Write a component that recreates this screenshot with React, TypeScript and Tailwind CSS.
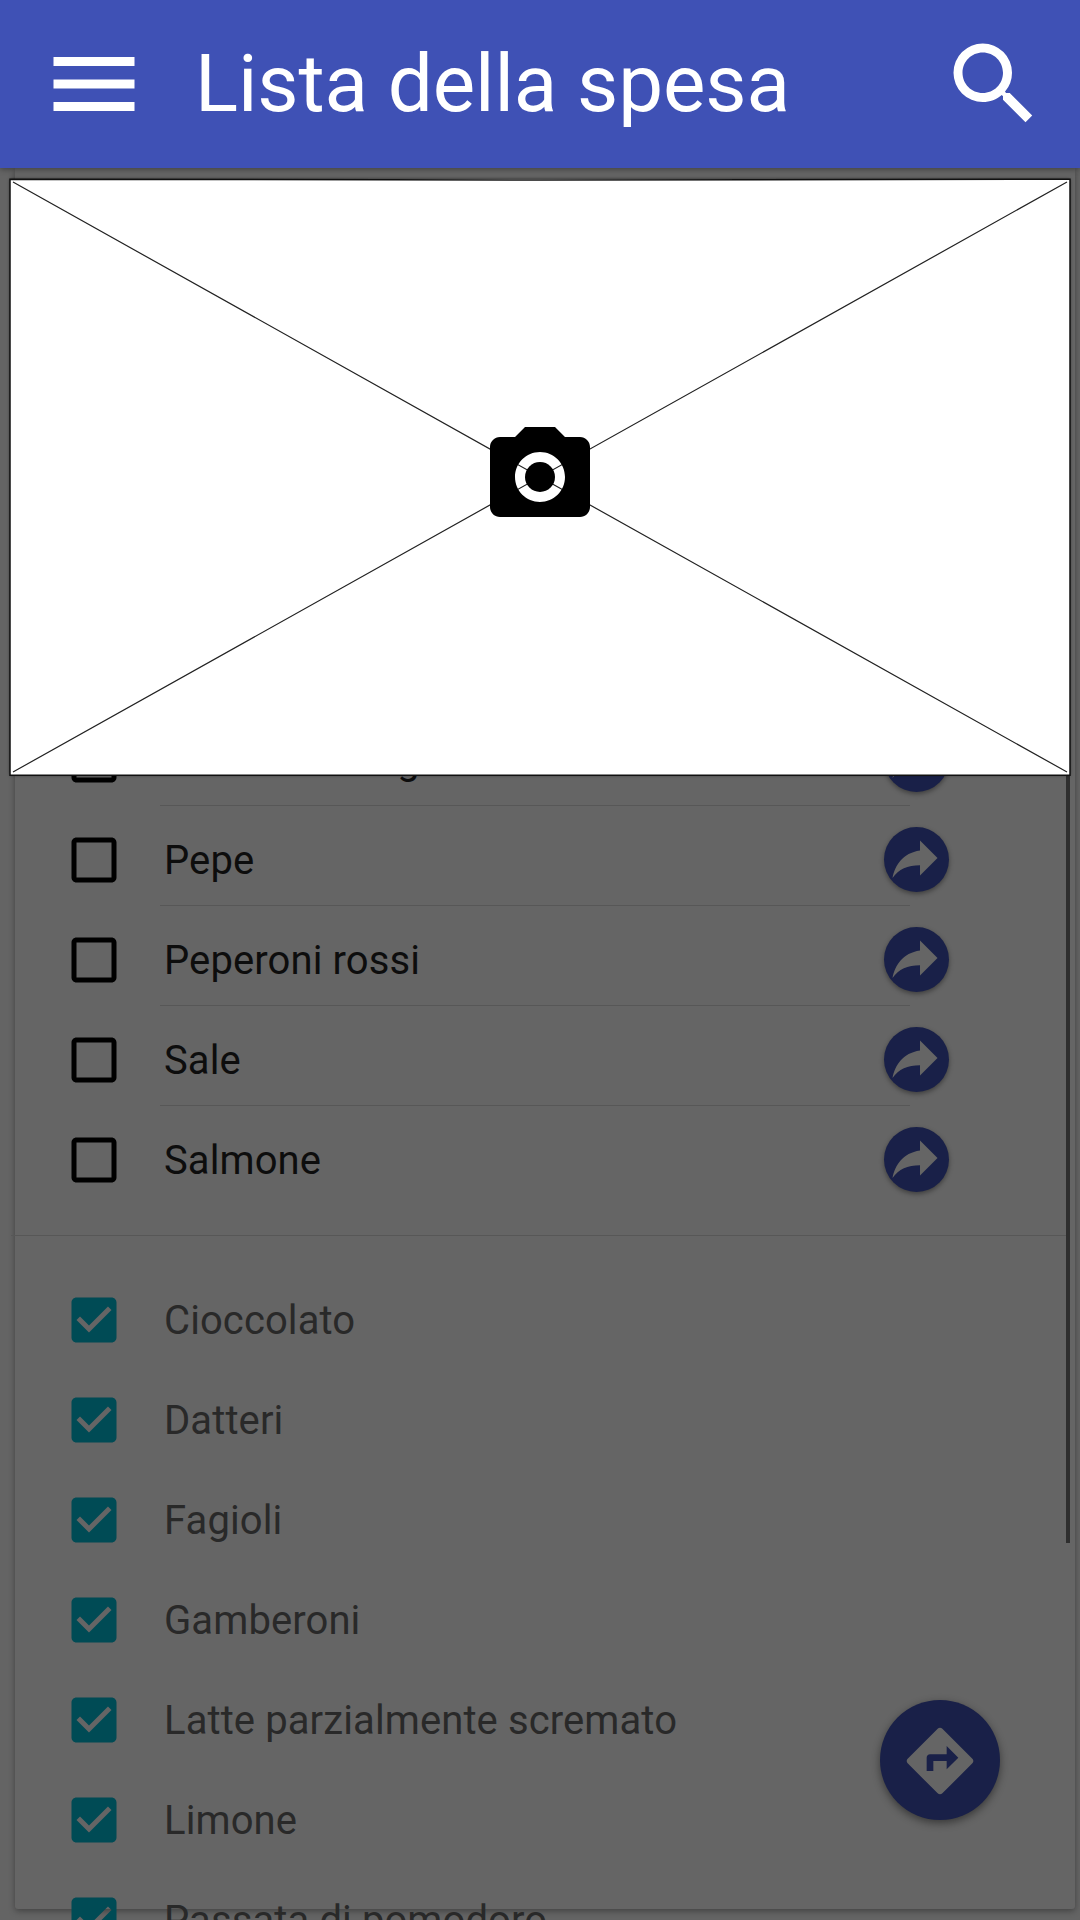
import React from "react";

const pending = ["Olio extra vergine", "Pepe", "Peperoni rossi", "Sale", "Salmone"];
const done = [
  "Cioccolato",
  "Datteri",
  "Fagioli",
  "Gamberoni",
  "Latte parzialmente scremato",
  "Limone",
  "Passata di pomodoro",
];

function Icon({ d, className }: { d: string; className: string }) {
  return (
    <svg viewBox="0 0 24 24" fill="currentColor" className={className}>
      <path d={d} />
    </svg>
  );
}

const MENU = "M3 18h18v-2H3v2zm0-5h18v-2H3v2zm0-7v2h18V6H3z";
const SEARCH =
  "M15.5 14h-.79l-.28-.27A6.471 6.471 0 0 0 16 9.5 6.5 6.5 0 1 0 9.5 16c1.61 0 3.09-.59 4.23-1.57l.27.28v.79l5 4.99L20.49 19l-4.99-5zm-6 0C7.01 14 5 11.99 5 9.5S7.01 5 9.5 5 14 7.01 14 9.5 11.99 14 9.5 14z";
const FORWARD = "M14 9V5l7 7-7 7v-4.1c-5 0-8.5 1.6-11 5.1 1-5 4-10 11-11z";
const DIRECTIONS =
  "M21.71 11.29l-9-9c-.39-.39-1.02-.39-1.41 0l-9 9c-.39.39-.39 1.02 0 1.41l9 9c.39.39 1.02.39 1.41 0l9-9c.39-.38.39-1.01 0-1.41zM14 14.5V12h-4v3H8v-4c0-.55.45-1 1-1h5V7.5l3.5 3.5-3.5 3.5z";
const BOX =
  "M19 5v14H5V5h14m0-2H5c-1.1 0-2 .9-2 2v14c0 1.1.9 2 2 2h14c1.1 0 2-.9 2-2V5c0-1.1-.9-2-2-2z";
const BOX_CHECKED =
  "M19 3H5c-1.11 0-2 .9-2 2v14c0 1.1.89 2 2 2h14c1.11 0 2-.9 2-2V5c0-1.1-.89-2-2-2zm-9 14l-5-5 1.41-1.41L10 14.17l7.59-7.59L19 8l-9 9z";

function Header() {
  return (
    <header className="relative z-20 flex h-[168px] shrink-0 items-center bg-[#3f51b5] pr-8 pl-10 text-white shadow-[0_1px_6px_rgba(0,0,0,0.4)]">
      <Icon d={MENU} className="size-[108px] shrink-0" />
      <h1 className="ml-[47px] flex-1 text-[80px] leading-[108px] font-normal tracking-[-0.1px] whitespace-nowrap">
        Lista della spesa
      </h1>
      <Icon d={SEARCH} className="size-[108px] shrink-0" />
    </header>
  );
}

function PendingRow({ label, divided }: { label: string; divided: boolean }) {
  return (
    <li className="flex h-[100px] items-center pl-[49px]">
      <Icon d={BOX} className="mt-2 size-[60px] shrink-0 text-black" />
      <div
        className={
          "ml-9 flex h-[100px] w-[750px] items-center border-b pt-2 pl-1 " +
          (divided ? "border-[#575757]" : "border-transparent")
        }
      >
        <span className="mt-[3px] flex-1 text-[40px] leading-[48px] tracking-[0.1px] whitespace-nowrap text-[#0d0d0d]">
          {label}
        </span>
        <span className="-mr-[39px] flex size-[65px] shrink-0 items-center justify-center rounded-full bg-[#192048] pr-[3px] pb-[3px] shadow-[0_2px_5px_rgba(0,0,0,0.4)]">
          <Icon d={FORWARD} className="size-[60px] shrink-0 text-[#656565]" />
        </span>
      </div>
    </li>
  );
}

function DoneRow({ label }: { label: string }) {
  return (
    <li className="flex h-[100px] items-center pl-[49px]">
      <Icon d={BOX_CHECKED} className="size-[60px] shrink-0 text-[#004b55]" />
      <span className="mt-[2px] ml-10 text-[40px] leading-[48px] tracking-[0.1px] whitespace-nowrap text-[#292929]">
        {label}
      </span>
    </li>
  );
}

/** Empty picture frame with crossed diagonals and a camera in the middle. */
function PhotoPlaceholder() {
  return (
    <div className="absolute top-[179px] left-[10px] z-30 h-[596px] w-[1060px] bg-white shadow-[0_0_3px_rgba(0,0,0,0.6)]">
      <svg viewBox="0 0 1060 596" className="size-full overflow-visible">
        <path d="M0 .2L530 1L1060 .2V596.200H0z" stroke="#111" strokeWidth="1.5" fill="#fff" />
        <path d="M3 3L1057 593M1057 3L3 593" stroke="#222" strokeWidth="1.2" fill="none" />
        <g transform="translate(470 238)">
          <circle cx="60" cy="60" r="15" />
          <path d="M45 10L35 20H20C14.5 20 10 24.5 10 30v60c0 5.5 4.5 10 10 10h80c5.5 0 10-4.500 10-10V30c0-5.500-4.500-10-10-10H85L75 10H45zm15 75c-13.800 0-25-11.200-25-25s11.200-25 25-25 25 11.200 25 25-11.200 25-25 25z" />
        </g>
      </svg>
    </div>
  );
}

export default function App() {
  return (
    <div className="relative flex h-[1920px] w-[1080px] flex-col overflow-hidden bg-[#646464] font-[Roboto,sans-serif]">
      <Header />
      <main className="relative ml-[15px] h-[1741px] w-[1060px] shrink-0 rounded-b-[3px] bg-[#656565] pt-[538px] shadow-[0_2px_6px_rgba(0,0,0,0.35)]">
        <ul>
          {pending.map((label, i) => (
            <PendingRow key={label} label={label} divided={i < pending.length - 1} />
          ))}
        </ul>
        <hr className="-ml-1 mt-[29px] mb-[34px] w-[1055px] border-t border-[#575757]" />
        <ul>
          {done.map((label) => (
            <DoneRow key={label} label={label} />
          ))}
        </ul>
        <div className="absolute top-[540px] right-[5px] h-[835px] w-1 bg-[#2e2e2e]" />
      </main>
      <button className="absolute top-[1700px] left-[880px] flex size-[120px] items-center justify-center rounded-full bg-[#192048] shadow-[0_3px_8px_rgba(0,0,0,0.45)]">
        <Icon d={DIRECTIONS} className="relative top-px size-20 shrink-0 text-[#656565]" />
      </button>
      <PhotoPlaceholder />
    </div>
  );
}
